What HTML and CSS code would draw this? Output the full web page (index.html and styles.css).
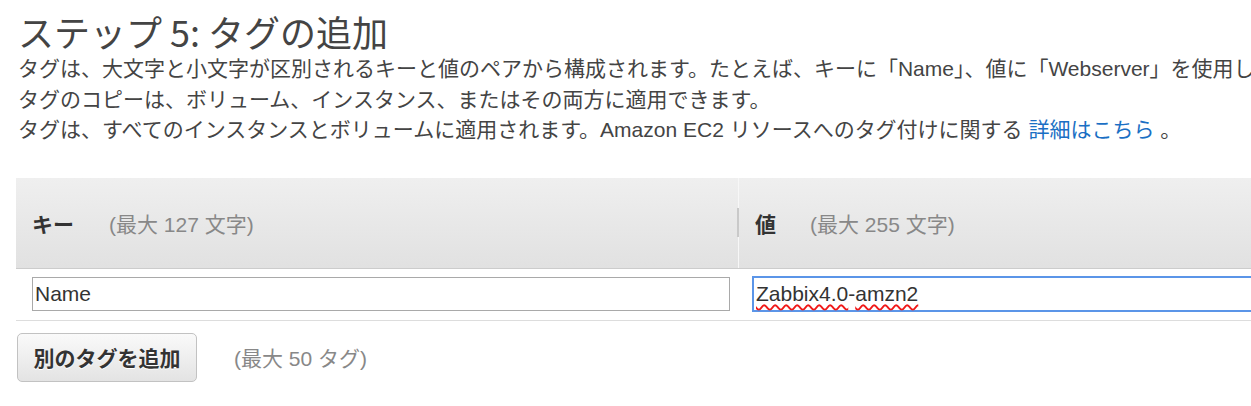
FILE: index.html
```html
<!DOCTYPE html>
<html lang="ja">
<head>
<meta charset="utf-8">
<link rel="stylesheet" href="styles.css">
</head>
<body>
<div class="page">
  <h1 class="title">ステップ 5: タグの追加</h1>
  <div class="desc">
    <p class="line">タグは、大文字と小文字が区別されるキーと値のペアから構成されます。たとえば、キーに「Name」、値に「Webserver」を使用し</p>
    <p class="line">タグのコピーは、ボリューム、インスタンス、またはその両方に適用できます。</p>
    <p class="line">タグは、すべてのインスタンスとボリュームに適用されます。Amazon EC2 リソースへのタグ付けに関する <a class="link" href="#">詳細はこちら</a> 。</p>
  </div>
  <div class="table">
    <div class="thead">
      <div class="th th-key"><span class="th-label">キー</span><span class="th-hint">(最大 127 文字)</span></div>
      <div class="th th-val"><span class="th-label">値</span><span class="th-hint">(最大 255 文字)</span></div>
    </div>
    <div class="trow">
      <div class="td td-key"><div class="field">Name</div></div>
      <div class="td td-val"><div class="field focused"><span class="spell">Zabbix4.0</span>-<span class="spell">amzn2</span></div></div>
    </div>
  </div>
  <div class="actions">
    <button class="btn" type="button">別のタグを追加</button>
    <span class="limit">(最大 50 タグ)</span>
  </div>
</div>
</body>
</html>
```

FILE: styles.css
```css
html, body {
  margin: 0;
  padding: 0;
  background: #ffffff;
  overflow: hidden;
}
body {
  font-family: "Liberation Sans", "Noto Sans CJK JP", sans-serif;
  color: #444444;
}
.page {
  padding: 0 0 0 16px;
}
.title {
  margin: 0;
  padding: 8px 0 0 2px;
  font-family: "Noto Sans CJK JP", sans-serif;
  font-weight: 400;
  font-size: 36px;
  line-height: 46px;
  color: #444444;
}
.desc {
  padding-left: 2px;
}
.line {
  margin: 0;
  font-size: 21px;
  line-height: 30.5px;
  white-space: nowrap;
  color: #444444;
}
.link {
  color: #1a6fc4;
  text-decoration: none;
}
.table {
  margin-top: 32px;
  width: 1300px;
}
.thead {
  display: flex;
  height: 90px;
  background: linear-gradient(#efefef, #e1e1e1);
  border-bottom: 1px solid #cccccc;
}
.th {
  display: flex;
  align-items: center;
  gap: 35px;
  position: relative;
  font-size: 21px;
}
.th-key {
  width: 722px;
  padding-left: 16px;
  box-sizing: border-box;
}
.th-val {
  flex: 1;
  padding-left: 16px;
  gap: 34px;
  border-left: 1px solid #f7f7f7;
}
.th-val::before {
  content: "";
  position: absolute;
  left: -2px;
  top: 30px;
  width: 2px;
  height: 29px;
  background: #c9c9c9;
}
.th-label {
  font-weight: 700;
  color: #333333;
}
.th-hint {
  color: #888888;
}
.trow {
  display: flex;
  height: 52px;
  border-bottom: 1px solid #dddddd;
  box-sizing: border-box;
  padding-top: 8px;
}
.td-key {
  width: 722px;
  padding-left: 16px;
  box-sizing: border-box;
}
.td-val {
  flex: 1;
  padding-left: 15px;
}
.field {
  box-sizing: border-box;
  height: 34px;
  border: 1px solid #a9a9a9;
  padding: 0 2px;
  font-family: "Liberation Sans", sans-serif;
  font-size: 21px;
  line-height: 32px;
  color: #333333;
  width: 698px;
  background: #ffffff;
}
.field.focused {
  width: 560px;
  border: 1px solid #5b95e8;
  box-shadow: 0 0 0 1px #5b95e8;
}
.spell {
  text-decoration: underline wavy #f01818;
  text-decoration-thickness: 1.5px;
  text-underline-offset: 3px;
}
.actions {
  display: flex;
  align-items: center;
  gap: 37px;
  padding-top: 12px;
  padding-left: 1px;
}
.btn {
  width: 180px;
  height: 49px;
  border: 1px solid #c2c2c2;
  border-radius: 5px;
  background: linear-gradient(#fafafa, #e3e3e3);
  font-family: "Noto Sans CJK JP", sans-serif;
  font-weight: 700;
  font-size: 21px;
  color: #333333;
  text-shadow: 0 1px 0 #ffffff;
  padding: 0;
}
.limit {
  font-size: 21px;
  color: #888888;
}
```
